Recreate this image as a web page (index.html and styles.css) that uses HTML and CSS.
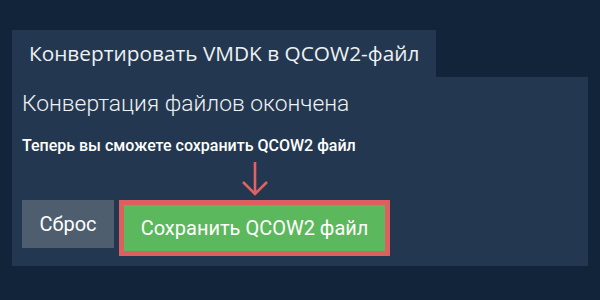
FILE: index.html
```html
<!DOCTYPE html>
<html lang="ru">
<head>
<meta charset="utf-8">
<link rel="stylesheet" href="styles.css">
</head>
<body>
<div class="page">
  <div class="tab">Конвертировать VMDK в QCOW2-файл</div>
  <div class="panel">
    <h1 class="heading">Конвертация файлов окончена</h1>
    <p class="note">Теперь вы сможете сохранить QCOW2 файл</p>
    <div class="actions">
      <button class="btn btn-reset">Сброс</button>
      <div class="save-wrap">
        <svg class="arrow" width="28" height="36" viewBox="0 0 28 36">
          <path d="M14 1 V33 M2 21 L14 33 L26 21" fill="none" stroke="#e06262" stroke-width="2.6"/>
        </svg>
        <button class="btn btn-save">Сохранить QCOW2 файл</button>
      </div>
    </div>
  </div>
</div>
</body>
</html>
```

FILE: styles.css
```css
html, body {
  margin: 0;
  padding: 0;
  background: #12243a;
}
.page {
  padding: 30px 12px 0 12px;
  font-family: Roboto, "Liberation Sans", sans-serif;
  color: #ffffff;
}
.tab {
  display: inline-block;
  height: 47px;
  line-height: 47px;
  padding: 0 17px;
  background: #233850;
  font-family: "Open Sans", "DejaVu Sans", sans-serif;
  font-size: 20.8px;
  color: #eef1f4;
}
.panel {
  background: #233850;
  padding: 12px 10px 10px 10px;
}
.heading {
  margin: 0;
  font-weight: 300;
  font-size: 22.8px;
  line-height: 30px;
  color: #eef1f4;
}
.note {
  margin: 17px 0 0 0;
  font-weight: 500;
  font-size: 16px;
  line-height: 20px;
  color: #ffffff;
}
.actions {
  display: flex;
  align-items: flex-start;
  gap: 5px;
  margin-top: 44px;
}
.btn {
  font-family: Roboto, "Liberation Sans", sans-serif;
  font-size: 20px;
  color: #ffffff;
  border: none;
  margin: 0;
  cursor: pointer;
}
.btn-reset {
  width: 92px;
  height: 48px;
  background: #4e5e6f;
}
.save-wrap {
  position: relative;
}
.btn-save {
  display: block;
  width: 271px;
  height: 56px;
  background: #5cb85c;
  border: 5px solid #dc6060;
}
.arrow {
  position: absolute;
  left: 50%;
  bottom: 100%;
  margin-left: -14px;
  margin-bottom: 3px;
}
```
